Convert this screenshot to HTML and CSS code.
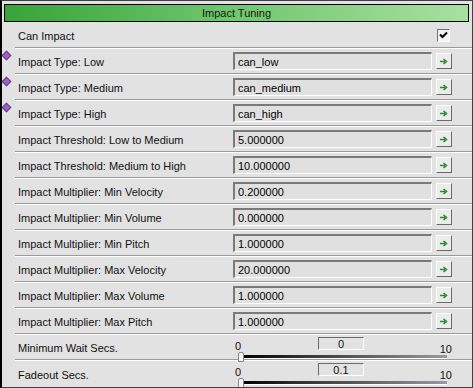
FILE: index.html
```html
<!DOCTYPE html>
<html lang="en">
<head>
  <meta charset="UTF-8" />
  <title>Impact Tuning</title>
  <link rel="stylesheet" href="styles.css">
</head>
<body>
  <div class="panel">
    <div class="title">Impact Tuning</div>

    <div class="row">
      <div class="gutter"></div>
      <div class="body">
        <span class="label">Can Impact</span>
        <span class="check">
          <svg width="9" height="8" viewBox="0 0 9 8"><path d="M1 3.5 L3.5 6 L8 1.5" fill="none" stroke="#000" stroke-width="2"/></svg>
        </span>
      </div>
    </div>

    <div class="row">
      <div class="gutter"><span class="diamond"></span></div>
      <div class="body">
        <span class="label">Impact Type: Low</span>
        <span class="field">can_low</span>
        <span class="go"><svg width="8" height="7" viewBox="0 0 8 7"><path d="M0 3.5 H5 M3.5 1 L6.5 3.5 L3.5 6" fill="none" stroke="#2f8a2f" stroke-width="1.6"/></svg></span>
      </div>
    </div>

    <div class="row">
      <div class="gutter"><span class="diamond"></span></div>
      <div class="body">
        <span class="label">Impact Type: Medium</span>
        <span class="field">can_medium</span>
        <span class="go"><svg width="8" height="7" viewBox="0 0 8 7"><path d="M0 3.5 H5 M3.5 1 L6.5 3.5 L3.5 6" fill="none" stroke="#2f8a2f" stroke-width="1.6"/></svg></span>
      </div>
    </div>

    <div class="row">
      <div class="gutter"><span class="diamond"></span></div>
      <div class="body">
        <span class="label">Impact Type: High</span>
        <span class="field">can_high</span>
        <span class="go"><svg width="8" height="7" viewBox="0 0 8 7"><path d="M0 3.5 H5 M3.5 1 L6.5 3.5 L3.5 6" fill="none" stroke="#2f8a2f" stroke-width="1.6"/></svg></span>
      </div>
    </div>

    <div class="row">
      <div class="gutter"></div>
      <div class="body">
        <span class="label">Impact Threshold: Low to Medium</span>
        <span class="field">5.000000</span>
        <span class="go"><svg width="8" height="7" viewBox="0 0 8 7"><path d="M0 3.5 H5 M3.5 1 L6.5 3.5 L3.5 6" fill="none" stroke="#2f8a2f" stroke-width="1.6"/></svg></span>
      </div>
    </div>

    <div class="row">
      <div class="gutter"></div>
      <div class="body">
        <span class="label">Impact Threshold: Medium to High</span>
        <span class="field">10.000000</span>
        <span class="go"><svg width="8" height="7" viewBox="0 0 8 7"><path d="M0 3.5 H5 M3.5 1 L6.5 3.5 L3.5 6" fill="none" stroke="#2f8a2f" stroke-width="1.6"/></svg></span>
      </div>
    </div>

    <div class="row">
      <div class="gutter"></div>
      <div class="body">
        <span class="label">Impact Multiplier: Min Velocity</span>
        <span class="field">0.200000</span>
        <span class="go"><svg width="8" height="7" viewBox="0 0 8 7"><path d="M0 3.5 H5 M3.5 1 L6.5 3.5 L3.5 6" fill="none" stroke="#2f8a2f" stroke-width="1.6"/></svg></span>
      </div>
    </div>

    <div class="row">
      <div class="gutter"></div>
      <div class="body">
        <span class="label">Impact Multiplier: Min Volume</span>
        <span class="field">0.000000</span>
        <span class="go"><svg width="8" height="7" viewBox="0 0 8 7"><path d="M0 3.5 H5 M3.5 1 L6.5 3.5 L3.5 6" fill="none" stroke="#2f8a2f" stroke-width="1.6"/></svg></span>
      </div>
    </div>

    <div class="row">
      <div class="gutter"></div>
      <div class="body">
        <span class="label">Impact Multiplier: Min Pitch</span>
        <span class="field">1.000000</span>
        <span class="go"><svg width="8" height="7" viewBox="0 0 8 7"><path d="M0 3.5 H5 M3.5 1 L6.5 3.5 L3.5 6" fill="none" stroke="#2f8a2f" stroke-width="1.6"/></svg></span>
      </div>
    </div>

    <div class="row">
      <div class="gutter"></div>
      <div class="body">
        <span class="label">Impact Multiplier: Max Velocity</span>
        <span class="field">20.000000</span>
        <span class="go"><svg width="8" height="7" viewBox="0 0 8 7"><path d="M0 3.5 H5 M3.5 1 L6.5 3.5 L3.5 6" fill="none" stroke="#2f8a2f" stroke-width="1.6"/></svg></span>
      </div>
    </div>

    <div class="row">
      <div class="gutter"></div>
      <div class="body">
        <span class="label">Impact Multiplier: Max Volume</span>
        <span class="field">1.000000</span>
        <span class="go"><svg width="8" height="7" viewBox="0 0 8 7"><path d="M0 3.5 H5 M3.5 1 L6.5 3.5 L3.5 6" fill="none" stroke="#2f8a2f" stroke-width="1.6"/></svg></span>
      </div>
    </div>

    <div class="row">
      <div class="gutter"></div>
      <div class="body">
        <span class="label">Impact Multiplier: Max Pitch</span>
        <span class="field">1.000000</span>
        <span class="go"><svg width="8" height="7" viewBox="0 0 8 7"><path d="M0 3.5 H5 M3.5 1 L6.5 3.5 L3.5 6" fill="none" stroke="#2f8a2f" stroke-width="1.6"/></svg></span>
      </div>
    </div>

    <div class="row">
      <div class="gutter"></div>
      <div class="body">
        <span class="label">Minimum Wait Secs.</span>
        <div class="slider">
          <div class="scale">
            <span class="min">0</span>
            <span class="value">0</span>
            <span class="max">10</span>
          </div>
          <div class="track"><span class="thumb"></span></div>
        </div>
      </div>
    </div>

    <div class="row last">
      <div class="gutter"></div>
      <div class="body">
        <span class="label">Fadeout Secs.</span>
        <div class="slider">
          <div class="scale">
            <span class="min">0</span>
            <span class="value">0.1</span>
            <span class="max">10</span>
          </div>
          <div class="track"><span class="thumb"></span></div>
        </div>
      </div>
    </div>
  </div>
</body>
</html>
```

FILE: styles.css
```css
body, html {
  margin: 0;
  padding: 0;
  background: #e2e2e2;
}
.panel {
  width: 473px;
  height: 388px;
  box-sizing: border-box;
  border-left: 2px solid #000;
  border-top: 1px solid #404040;
  border-right: 1px solid #404040;
  border-bottom: 1px solid #404040;
  background: #e2e2e2;
  font-family: "Liberation Sans", Arial, sans-serif;
  font-size: 11px;
  color: #111;
  overflow: hidden;
}
.title {
  margin: 3px 3px 1px 2px;
  height: 16px;
  border: 1px solid #000;
  background: linear-gradient(to right, #38a338, #6cc46a 45%, #a8e0a0);
  text-align: center;
  line-height: 16px;
  color: #102010;
}
.row {
  display: flex;
  height: 26px;
}
.gutter {
  width: 13px;
  flex: none;
  position: relative;
}
.diamond {
  position: absolute;
  left: 1px;
  top: 3px;
  width: 5px;
  height: 5px;
  background: #9a62c4;
  border: 1px solid #6a3a90;
  transform: rotate(45deg);
}
.body {
  flex: 1;
  display: flex;
  align-items: center;
  padding-left: 3px;
  padding-right: 20px;
  border-bottom: 1px solid #9a9a9a;
  box-shadow: 0 1px 0 #fff;
  margin-bottom: 1px;
}
.row.last .body {
  border-bottom: none;
  box-shadow: none;
}
.label {
  width: 215px;
  flex: none;
  padding-top: 2px;
}
.check {
  margin-left: auto;
  margin-right: 2px;
  width: 11px;
  height: 11px;
  border-top: 1px solid #707070;
  border-left: 1px solid #707070;
  border-right: 1px solid #fff;
  border-bottom: 1px solid #fff;
  background: #f2f2f2;
  display: flex;
  align-items: center;
  justify-content: center;
}
.field {
  width: 193px;
  height: 15px;
  line-height: 16px;
  padding-left: 3px;
  border-top: 2px solid #7a7a7a;
  border-left: 2px solid #7a7a7a;
  border-right: 1px solid #fff;
  border-bottom: 1px solid #fff;
  background: #e0e0e0;
  color: #000;
}
.go {
  margin-left: 4px;
  width: 14px;
  height: 14px;
  border-top: 1px solid #fff;
  border-left: 1px solid #fff;
  border-right: 1px solid #6a6a6a;
  border-bottom: 1px solid #6a6a6a;
  background: #ececec;
  display: flex;
  align-items: center;
  justify-content: center;
}
.slider {
  width: 221px;
  margin-left: -1px;
  display: flex;
  flex-direction: column;
  padding-top: 1px;
}
.scale {
  display: flex;
  align-items: flex-end;
  height: 16px;
  font-size: 11px;
}
.min {
  width: 86px;
  padding-left: 3px;
  padding-bottom: 1px;
  box-sizing: border-box;
}
.value {
  width: 44px;
  height: 11px;
  line-height: 12px;
  text-align: center;
  align-self: flex-start;
  border-top: 1px solid #6a6a6a;
  border-left: 1px solid #6a6a6a;
  border-right: 1px solid #fff;
  border-bottom: 1px solid #fff;
}
.max {
  margin-left: auto;
  padding-right: 1px;
  margin-bottom: -2px;
}
.track {
  position: relative;
  margin: 2px 6px 0 9px;
  height: 3px;
  background: linear-gradient(to right, #000, #333 30%, #9a9aa0);
  border-bottom: 1px solid #fff;
}
.thumb {
  position: absolute;
  left: -3px;
  top: -3px;
  width: 4px;
  height: 8px;
  background: #f4f4f4;
  border: 1px solid #888;
  border-radius: 2px 2px 0 0;
}
```
